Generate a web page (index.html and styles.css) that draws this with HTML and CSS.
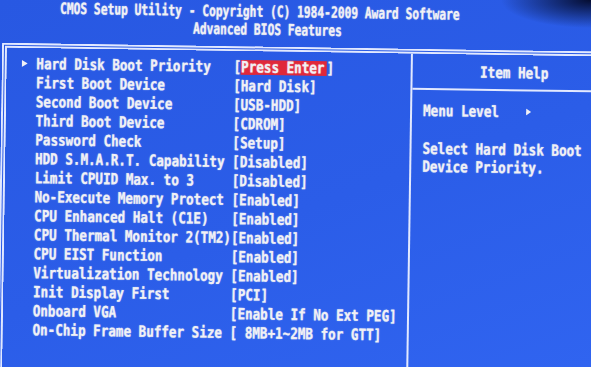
FILE: index.html
```html
<!DOCTYPE html>
<html>

<head>
    <title>CMOS Setup Utility - Advanced BIOS Features</title>
    <link rel="stylesheet" href="styles.css">
</head>

<body>
    <div class="screen">
        <div class="header">
            <div class="tall title title-main">CMOS Setup Utility - Copyright (C) 1984-2009 Award Software</div>
            <div class="tall title title-sub">Advanced BIOS Features</div>
        </div>

        <div class="frame">
            <div class="menu">
                <div class="row">
                    <span class="pointer"><svg viewBox="0 0 6 7" width="6" height="7"><path d="M0 0L6 3.5L0 7Z" fill="currentColor"/></svg></span>
                    <span class="tall label">Hard Disk Boot Priority</span>
                    <span class="tall value">[<span class="hl">Press Enter</span>]</span>
                </div>
                <div class="row"><span></span><span class="tall label">First Boot Device</span><span class="tall value">[Hard Disk]</span></div>
                <div class="row"><span></span><span class="tall label">Second Boot Device</span><span class="tall value">[USB-HDD]</span></div>
                <div class="row"><span></span><span class="tall label">Third Boot Device</span><span class="tall value">[CDROM]</span></div>
                <div class="row"><span></span><span class="tall label">Password Check</span><span class="tall value">[Setup]</span></div>
                <div class="row"><span></span><span class="tall label">HDD S.M.A.R.T. Capability</span><span class="tall value">[Disabled]</span></div>
                <div class="row"><span></span><span class="tall label">Limit CPUID Max. to 3</span><span class="tall value">[Disabled]</span></div>
                <div class="row"><span></span><span class="tall label">No-Execute Memory Protect</span><span class="tall value">[Enabled]</span></div>
                <div class="row"><span></span><span class="tall label">CPU Enhanced Halt (C1E)</span><span class="tall value">[Enabled]</span></div>
                <div class="row"><span></span><span class="tall label">CPU Thermal Monitor 2(TM2)</span><span class="tall value">[Enabled]</span></div>
                <div class="row"><span></span><span class="tall label">CPU EIST Function</span><span class="tall value">[Enabled]</span></div>
                <div class="row"><span></span><span class="tall label">Virtualization Technology</span><span class="tall value">[Enabled]</span></div>
                <div class="row"><span></span><span class="tall label">Init Display First</span><span class="tall value">[PCI]</span></div>
                <div class="row"><span></span><span class="tall label">Onboard VGA</span><span class="tall value">[Enable If No Ext PEG]</span></div>
                <div class="row"><span></span><span class="tall label">On-Chip Frame Buffer Size</span><span class="tall value">[ 8MB+1~2MB for GTT]</span></div>
            </div>

            <div class="help">
                <div class="help-title">
                    <div class="tall">Item Help</div>
                </div>
                <div class="help-body">
                    <div class="menu-level">
                        <span class="tall">Menu Level</span>
                        <svg viewBox="0 0 5 7" width="5" height="7"><path d="M0 0L5 3.5L0 7Z" fill="currentColor"/></svg>
                    </div>
                    <div class="help-text">
                        <div class="tall">Select Hard Disk Boot</div>
                        <div class="tall">Device Priority.</div>
                    </div>
                </div>
            </div>
        </div>
    </div>
</body>

</html>
```

FILE: styles.css
```css
body {
    margin: 0;
    width: 591px;
    height: 367px;
    overflow: hidden;
    background:
        radial-gradient(ellipse 90px 28px at 100% 0, #050d30 0, rgba(5, 13, 48, 0) 100%),
        linear-gradient(160deg, #2858e2 0%, #2b5de8 55%, #3064f0 100%);
    color: #f1f1f5;
    font-family: "DejaVu Sans Mono", monospace;
    font-weight: bold;
    font-size: 12.6px;
}

.screen {
    width: 596px;
    height: 372px;
    overflow: hidden;
    transform: rotate(0.85deg);
    transform-origin: 295.5px 183.5px;
}

/* the bios font is taller than it is wide */
.tall {
    transform: scaleY(1.23);
    text-shadow: 0 0 1.5px rgba(255, 255, 255, 0.45);
    -webkit-text-stroke: 0.2px #f1f1f5;
}

.header {
    padding-top: 5.5px;
}

.title {
    font-size: 11.26px;
    line-height: 13px;
    margin-bottom: 5px;
    white-space: pre;
    transform: scaleY(1.38);
}

.title-main {
    padding-left: 57.5px;
}

.title-sub {
    padding-left: 190.7px;
}

.frame {
    margin-top: 10.5px;
    display: grid;
    grid-template-columns: 406px 1fr;
    height: 320px;
    border-top: 5px double #e2e9ff;
    border-left: 5px double #e2e9ff;
}

.menu {
    padding: 6px 0 0 15px;
    border-right: 2px solid #e2e9ff;
}

.row {
    display: grid;
    grid-template-columns: 14.7px 26ch max-content;
    align-items: center;
    height: 19px;
    line-height: 15px;
    white-space: pre;
}

.pointer {
    display: flex;
    align-items: center;
}

.hl {
    display: inline-block;
    height: 12px;
    line-height: 12px;
    background: #e0283a;
    padding-right: 2px;
}

.help-title {
    padding: 10.2px 0 8.8px 67.4px;
    line-height: 15px;
    border-bottom: 2px solid #e2e9ff;
}

.help-body {
    padding: 11px 0 0 11px;
}

.menu-level {
    display: flex;
    align-items: center;
    height: 19px;
    line-height: 15px;
}

.menu-level svg {
    margin-left: 26.7px;
}

.help-text {
    margin-top: 22px;
    line-height: 14px;
}

.help-text .tall {
    margin-bottom: 4px;
}
```
